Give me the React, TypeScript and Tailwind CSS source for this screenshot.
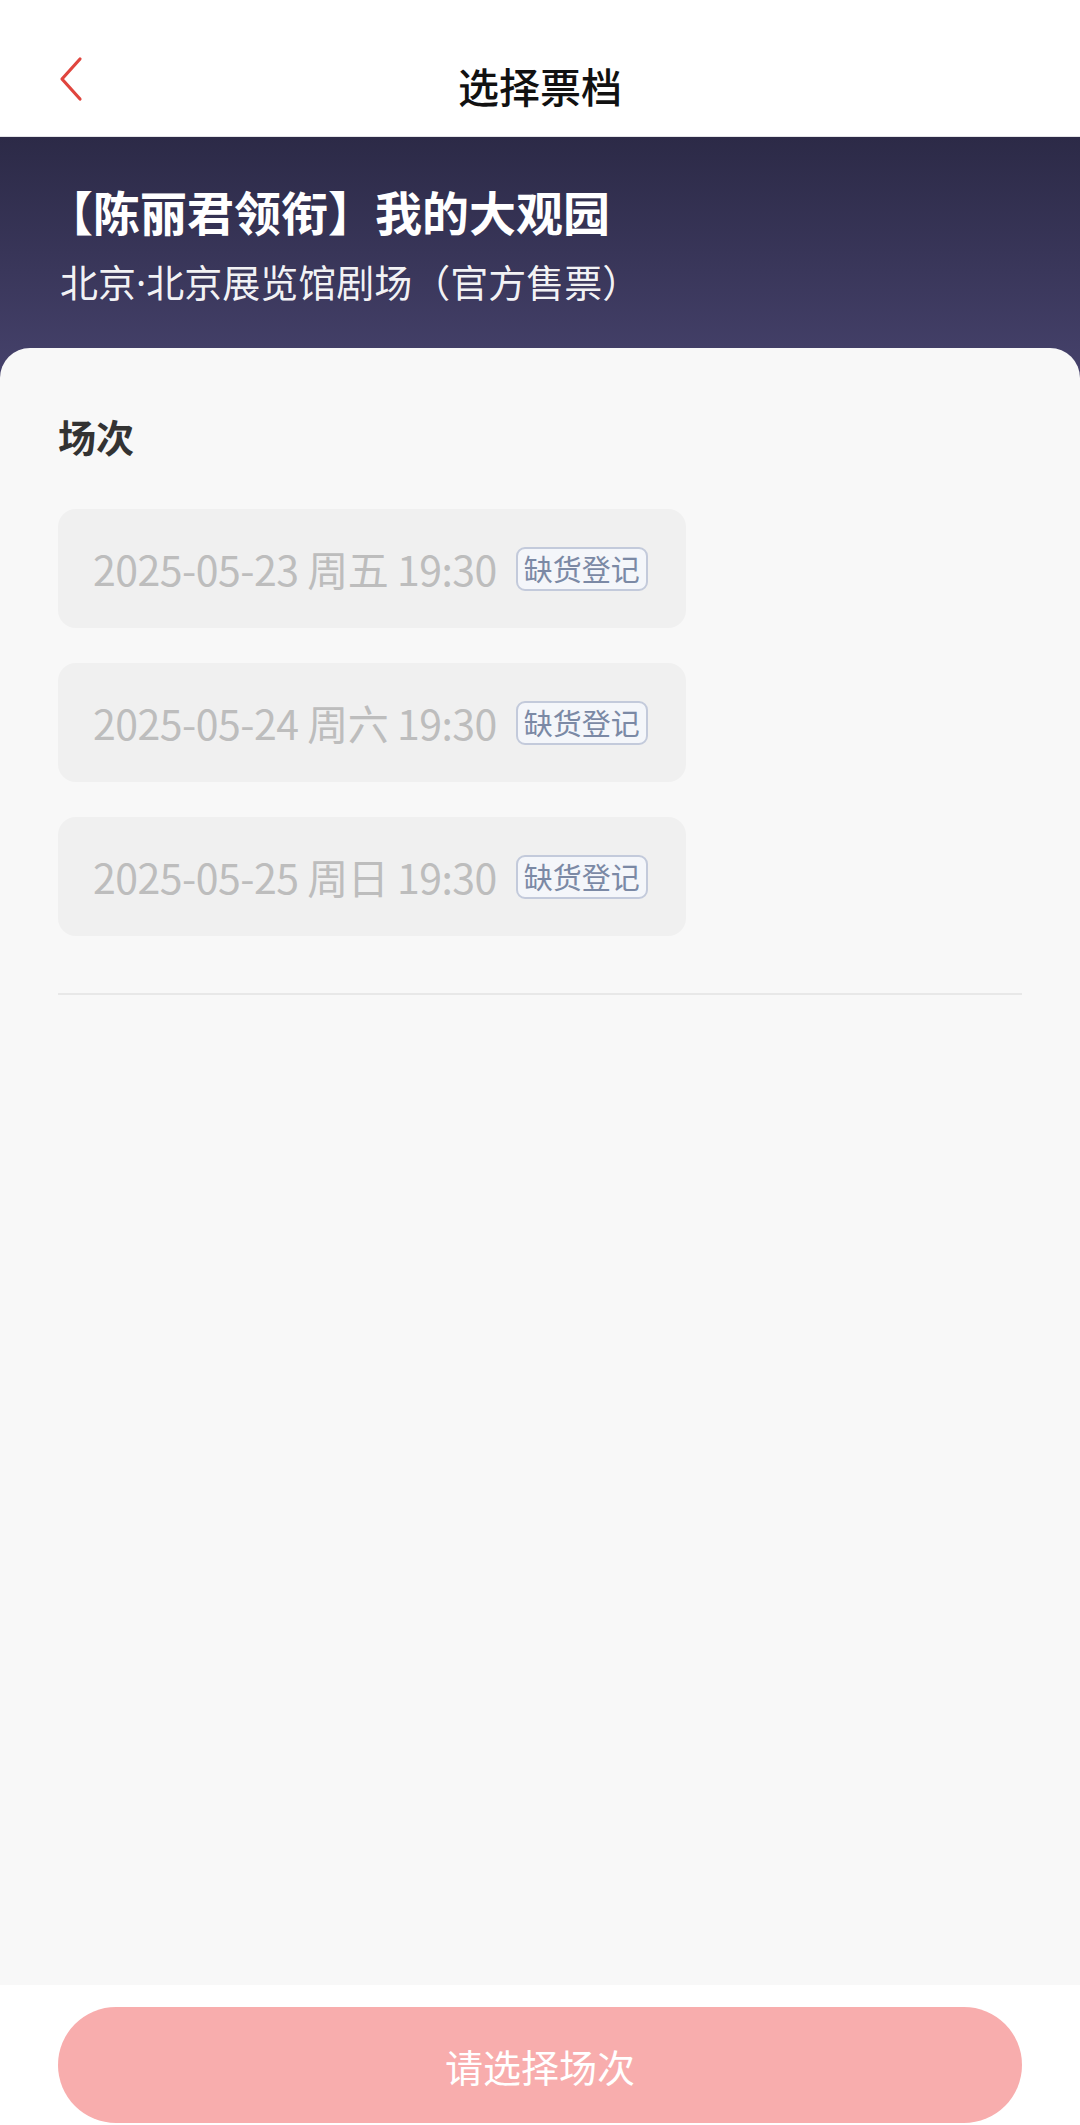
const sessions = [
  { date: "2025-05-23", day: "周五", time: "19:30" },
  { date: "2025-05-24", day: "周六", time: "19:30" },
  { date: "2025-05-25", day: "周日", time: "19:30" },
];

function BackIcon() {
  return (
    <svg className="h-[46px] w-[26px]" viewBox="0 0 26 46" fill="none">
      <path d="M22 3L4 23l18 20" stroke="#e0453e" strokeWidth={3.2} strokeLinecap="round" strokeLinejoin="round" />
    </svg>
  );
}

export default function App() {
  return (
    <div
      className="flex h-[2125px] w-[1080px] flex-col overflow-hidden bg-white"
      style={{ fontFamily: '"Noto Sans CJK SC", "Noto Sans", sans-serif' }}
    >
      {/* Header */}
      <header className="relative flex h-[137px] shrink-0 items-center justify-center border-b border-[#e4e4e8] bg-white pt-[34px]">
        <button className="absolute left-[58px] top-[56px]">
          <BackIcon />
        </button>
        <h1 className="text-[41px] font-medium leading-none text-[#111111]">选择票档</h1>
      </header>

      {/* Show info */}
      <div className="shrink-0 bg-gradient-to-b from-[#2c2a47] to-[#46426c] px-[60px] pb-[76px] pt-[44px]">
        <h2 className="-ml-[14px] text-[47px] font-bold leading-[60px] text-white">【陈丽君领衔】我的大观园</h2>
        <p className="mt-[16px] text-[38px] leading-[48px] text-white/95">
          北京<span style={{ fontFamily: '"Noto Sans", sans-serif' }}>·</span>北京展览馆剧场（官方售票）
        </p>
      </div>

      {/* Session list */}
      <div className="relative -mt-[34px] flex flex-1 flex-col rounded-t-[30px] bg-[#f8f8f8] px-[58px] pt-[60px]">
        <h3 className="text-[38px] font-bold leading-[56px] text-[#333333]">场次</h3>
        <div className="mt-[45px] flex flex-col gap-[35px]">
          {sessions.map((s) => (
            <div
              key={s.date}
              className="flex h-[119px] w-[628px] items-center rounded-[18px] bg-[#f0f0f0] pl-[35px]"
            >
              <span className="text-[41px] leading-none tracking-[-0.5px] text-[#bdbdbd]">
                {s.date} {s.day} {s.time}
              </span>
              <span className="ml-[19px] flex h-[44px] w-[132px] items-center justify-center rounded-[9px] border-2 border-[#c3cadb] bg-[#f4f6fa] text-[29px] leading-none text-[#7b89a5]">
                缺货登记
              </span>
            </div>
          ))}
        </div>
        <div className="mt-[57px] h-[2px] w-full bg-[#e8e8e8]" />
      </div>

      {/* Bottom bar */}
      <div className="h-[140px] shrink-0 bg-white px-[58px] pt-[22px]">
        <button className="flex h-[116px] w-full items-center justify-center rounded-full bg-[#f8adad] text-[38px] text-white">
          请选择场次
        </button>
      </div>
    </div>
  );
}
